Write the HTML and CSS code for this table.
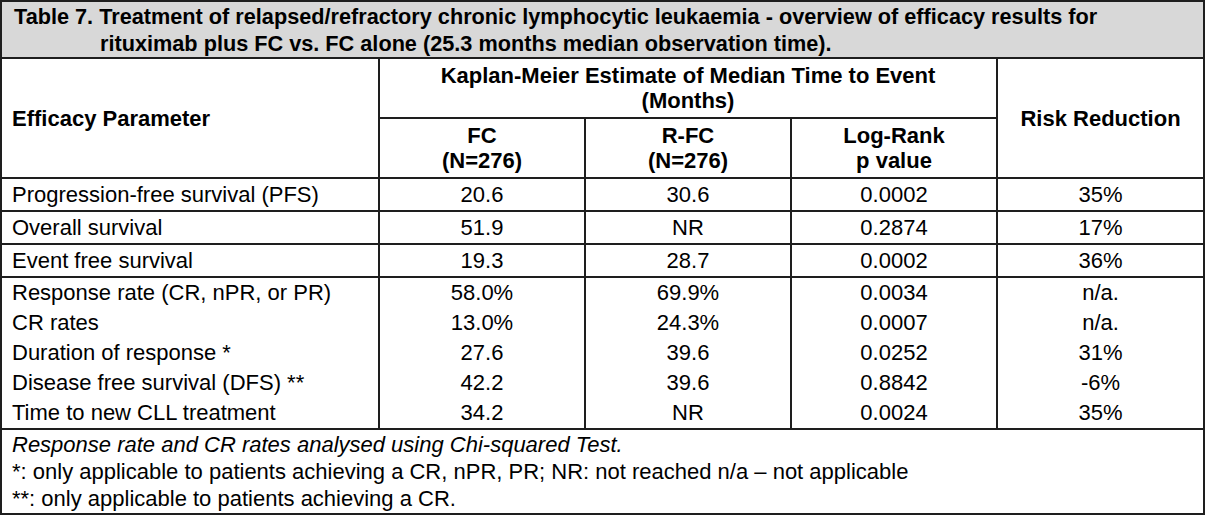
FILE: index.html
```html
<!DOCTYPE html>
<html lang="en">
<head>
<meta charset="utf-8">
<title>Table 7</title>
<link rel="stylesheet" href="styles.css">
</head>
<body>
<table class="results">
  <colgroup>
    <col class="c-param">
    <col class="c-val">
    <col class="c-val">
    <col class="c-val">
    <col class="c-risk">
  </colgroup>
  <thead>
    <tr class="title-row">
      <th colspan="5" class="title">Table 7. Treatment of relapsed/refractory chronic lymphocytic leukaemia - overview of efficacy results for<br>rituximab plus FC vs. FC alone (25.3 months median observation time).</th>
    </tr>
    <tr class="head1">
      <th rowspan="2" class="param-head">Efficacy Parameter</th>
      <th colspan="3">Kaplan-Meier Estimate of Median Time to Event<br>(Months)</th>
      <th rowspan="2">Risk Reduction</th>
    </tr>
    <tr class="head2">
      <th>FC<br>(N=276)</th>
      <th>R-FC<br>(N=276)</th>
      <th>Log-Rank<br>p value</th>
    </tr>
  </thead>
  <tbody class="single">
    <tr><td class="param">Progression-free survival (PFS)</td><td>20.6</td><td>30.6</td><td>0.0002</td><td>35%</td></tr>
    <tr><td class="param">Overall survival</td><td>51.9</td><td>NR</td><td>0.2874</td><td>17%</td></tr>
    <tr><td class="param">Event free survival</td><td>19.3</td><td>28.7</td><td>0.0002</td><td>36%</td></tr>
  </tbody>
  <tbody class="group">
    <tr><td class="param">Response rate (CR, nPR, or PR)</td><td>58.0%</td><td>69.9%</td><td>0.0034</td><td>n/a.</td></tr>
    <tr><td class="param">CR rates</td><td>13.0%</td><td>24.3%</td><td>0.0007</td><td>n/a.</td></tr>
    <tr><td class="param">Duration of response *</td><td>27.6</td><td>39.6</td><td>0.0252</td><td>31%</td></tr>
    <tr><td class="param">Disease free survival (DFS) **</td><td>42.2</td><td>39.6</td><td>0.8842</td><td>-6%</td></tr>
    <tr><td class="param">Time to new CLL treatment</td><td>34.2</td><td>NR</td><td>0.0024</td><td>35%</td></tr>
  </tbody>
  <tfoot>
    <tr>
      <td colspan="5" class="notes"><em>Response rate and CR rates analysed using Chi-squared Test.</em><br>*: only applicable to patients achieving a CR, nPR, PR; NR: not reached n/a – not applicable<br>**: only applicable to patients achieving a CR.</td>
    </tr>
  </tfoot>
</table>
</body>
</html>
```

FILE: styles.css
```css
html, body {
  margin: 0;
  padding: 0;
  background: #ffffff;
}

body {
  font-family: "Liberation Sans", Arial, Helvetica, sans-serif;
  font-size: 22px;
  color: #000;
}

.results {
  border-collapse: collapse;
  table-layout: fixed;
  width: 1205px;
}

.c-param { width: 378px; }
.c-val { width: 206px; }
.c-risk { width: 207px; }

.results th,
.results td {
  border: 2px solid #1e1e1e;
  padding: 0;
  text-align: center;
  vertical-align: middle;
}

.results th {
  font-weight: bold;
}

.title {
  background: #d8d8d8;
  text-align: left !important;
  font-size: 21.7px;
  line-height: 27px;
  padding: 1px 4px 0 98px !important;
  text-indent: -86px;
}

.head1 th,
.head2 th {
  line-height: 25px;
  height: 58px;
}

.param-head {
  text-align: left !important;
  padding-left: 10px !important;
}

.single td {
  line-height: 31px;
}

.group td {
  border-top: none;
  border-bottom: none;
  line-height: 30px;
}

.param {
  text-align: left !important;
  padding-left: 10px !important;
}

.notes {
  text-align: left !important;
  padding: 1px 10px 1px 10px !important;
  line-height: 27px;
}
```
